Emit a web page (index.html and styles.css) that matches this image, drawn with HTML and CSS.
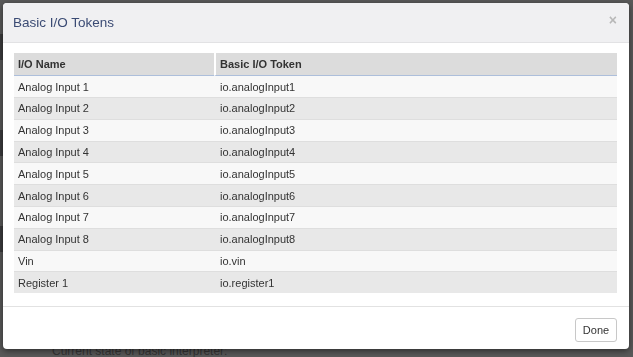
FILE: index.html
```html
<!DOCTYPE html>
<html lang="en">
<head>
  <meta charset="UTF-8" />
  <meta name="viewport" content="width=device-width, initial-scale=1.0" />
  <title>Basic I/O Tokens</title>
  <link rel="stylesheet" href="styles.css">
</head>
<body>
  <div class="page">
    <div class="page-band"></div>
    <div class="page-band"></div>
    <div class="page-band"></div>
    <p class="page-note">Current state of basic interpreter:</p>
  </div>

  <div class="backdrop"></div>

  <div class="modal">
    <div class="modal-header">
      <h4 class="modal-title">Basic I/O Tokens</h4>
      <span class="close">&times;</span>
    </div>

    <div class="modal-body">
      <table class="tokens">
        <thead>
          <tr>
            <th>I/O Name</th>
            <th>Basic I/O Token</th>
          </tr>
        </thead>
        <tbody>
          <tr><td>Analog Input 1</td><td>io.analogInput1</td></tr>
          <tr><td>Analog Input 2</td><td>io.analogInput2</td></tr>
          <tr><td>Analog Input 3</td><td>io.analogInput3</td></tr>
          <tr><td>Analog Input 4</td><td>io.analogInput4</td></tr>
          <tr><td>Analog Input 5</td><td>io.analogInput5</td></tr>
          <tr><td>Analog Input 6</td><td>io.analogInput6</td></tr>
          <tr><td>Analog Input 7</td><td>io.analogInput7</td></tr>
          <tr><td>Analog Input 8</td><td>io.analogInput8</td></tr>
          <tr><td>Vin</td><td>io.vin</td></tr>
          <tr><td>Register 1</td><td>io.register1</td></tr>
        </tbody>
      </table>
    </div>

    <div class="modal-footer">
      <button class="btn">Done</button>
    </div>
  </div>
</body>
</html>
```

FILE: styles.css
```css
body {
  margin: 0;
  font-family: "Liberation Sans", Arial, sans-serif;
  background-color: #5a5a5a;
  height: 357px;
  overflow: hidden;
}
.page {
  padding-top: 34px;
}
.page-band {
  height: 26px;
  margin-bottom: 70px;
  background: #2c2c2e;
  width: 40px;
}
.page-note {
  position: absolute;
  left: 52px;
  top: 344px;
  margin: 0;
  font-size: 12px;
  color: #222;
}
.backdrop {
  position: fixed;
  inset: 0;
  background: rgba(90, 90, 90, 0.35);
}
.modal {
  position: absolute;
  left: 3px;
  top: 3px;
  width: 626px;
  background: white;
  border-radius: 4px;
  box-shadow: 0 2px 6px rgba(0,0,0,0.5);
  overflow: hidden;
}
.modal-header {
  display: flex;
  justify-content: space-between;
  align-items: center;
  height: 39px;
  padding: 0 10px;
  background: #f0f0f2;
  border-bottom: 1px solid #e2e2e4;
}
.modal-title {
  margin: 0;
  font-size: 13.5px;
  font-weight: normal;
  color: #3b4b74;
}
.close {
  font-size: 14px;
  font-weight: bold;
  color: #b8b8b8;
  margin-top: -6px;
  margin-right: 2px;
}
.modal-body {
  padding: 10px 12px 13px 11px;
}
.tokens {
  width: 100%;
  border-collapse: separate;
  border-spacing: 0;
  font-size: 11px;
  color: #333;
}
.tokens th {
  text-align: left;
  height: 22px;
  padding: 0 4px;
  background: #dcdcdc;
  border-bottom: 1px solid #adbfdb;
}
.tokens th + th {
  border-left: 2px solid white;
}
.tokens th:first-child,
.tokens td:first-child {
  width: 192px;
}
.tokens td {
  height: 20.8px;
  padding: 0 4px;
  border-top: 1px solid #dedede;
}
.tokens td + td {
  padding-left: 6px;
}
.tokens tbody tr:first-child td {
  border-top: none;
  height: 21px;
}
.tokens tbody tr:nth-child(odd) {
  background: #f8f8f8;
}
.tokens tbody tr:nth-child(even) {
  background: #e8e8e8;
}
.modal-footer {
  display: flex;
  justify-content: flex-end;
  padding: 11px 12px 7px;
  border-top: 1px solid #e2e2e2;
}
.btn {
  height: 24px;
  width: 42px;
  padding: 0;
  font-family: inherit;
  font-size: 11px;
  color: #333;
  background: white;
  border: 1px solid #c8c8c8;
  border-radius: 3px;
}
```
